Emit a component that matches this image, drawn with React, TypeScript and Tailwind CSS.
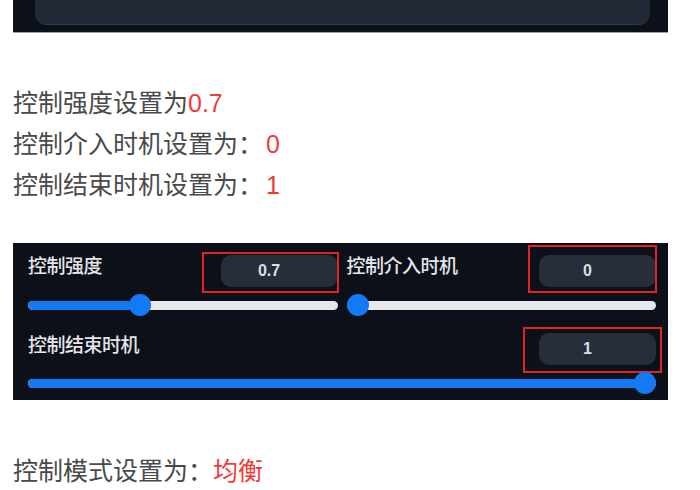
import React from 'react';

const FONT = '"Liberation Sans", "Noto Sans CJK SC", sans-serif';

interface SliderProps {
    value: number;
}

const Slider: React.FC<SliderProps> = ({ value }) => {
    return (
        <div className="relative h-[22px] flex items-center">
            <div className="h-[9px] w-full rounded-full bg-[#e6e8eb] overflow-hidden">
                <div
                    className="h-full bg-[#1479f5]"
                    style={{ width: `calc(${value * 100}% - ${value * 22}px + 11px)` }}
                />
            </div>
            <div
                className="absolute top-0 w-[22px] h-[22px] rounded-full bg-[#1479f5]"
                style={{ left: `calc(${value * 100}% - ${value * 22}px)` }}
            />
        </div>
    );
};

interface FieldProps {
    value: string;
    markClass: string;
}

// number box with the red annotation frame laid over it
const ValueBox: React.FC<FieldProps> = ({ value, markClass }) => (
    <div className="relative">
        <div className="w-[117px] h-8 pr-[20px] rounded-[10px] bg-[#272e3a] text-[#dcdfe4] text-[16px] font-bold flex items-center justify-center">
            {value}
        </div>
        <div className={`absolute border-2 border-[#e02424] ${markClass}`} />
    </div>
);

const Label: React.FC<{ children: React.ReactNode }> = ({ children }) => (
    <span className="text-[19px] font-medium text-[#e4e6ea] leading-none tracking-[-0.5px]">{children}</span>
);

export default function App() {
    return (
        <div className="w-[700px] h-[490px] bg-white overflow-hidden" style={{ fontFamily: FONT }}>
            <div className="ml-[13px] w-[655px]">
                {/* bottom of the previous screenshot */}
                <div className="h-[33px] bg-[#0c1018] border-b border-[#a0a4aa] pl-[22px] pr-[18px]">
                    <div className="h-[25px] bg-[#222a37] rounded-b-[12px] border-b border-[#343c49]" />
                </div>

                <div className="mt-[50px] text-[25px] leading-[41px] text-[#4a4a4a]">
                    <p>控制强度设置为<span className="text-[#ef3b3b]">0.7</span></p>
                    <p>控制介入时机设置为：<span className="text-[#ef3b3b] ml-[3px]">0</span></p>
                    <p>控制结束时机设置为：<span className="text-[#ef3b3b] ml-[3px]">1</span></p>
                </div>

                <div className="mt-[37px] h-[157px] bg-[#0c1018] pt-[12px] pl-[15px] pr-[12px] pb-[6px]">
                    <div className="grid grid-cols-2 gap-x-[9px]">
                        <div>
                            <div className="flex items-center justify-between">
                                <div className="mb-[6px]"><Label>控制强度</Label></div>
                                <ValueBox value="0.7" markClass="-left-[19px] -right-[1px] -top-[3px] -bottom-[6px]" />
                            </div>
                            <div className="mt-[7px]">
                                <Slider value={0.35} />
                            </div>
                        </div>
                        <div>
                            <div className="flex items-center justify-between">
                                <div className="mb-[6px]"><Label>控制介入时机</Label></div>
                                <ValueBox value="0" markClass="-left-[11px] -right-[1px] -top-[10px] -bottom-[6px]" />
                            </div>
                            <div className="mt-[7px]">
                                <Slider value={0} />
                            </div>
                        </div>
                    </div>

                    <div className="mt-[17px]">
                        <div className="flex items-center justify-between">
                            <div className="mb-[4px]"><Label>控制结束时机</Label></div>
                            <ValueBox value="1" markClass="-left-[16px] -right-[6px] -top-[6px] -bottom-[8px]" />
                        </div>
                        <div className="mt-[7px]">
                            <Slider value={1} />
                        </div>
                    </div>
                </div>

                <p className="mt-[51px] text-[25px] leading-[41px] text-[#4a4a4a]">
                    控制模式设置为：<span className="text-[#ef3b3b]">均衡</span>
                </p>
            </div>
        </div>
    );
}
